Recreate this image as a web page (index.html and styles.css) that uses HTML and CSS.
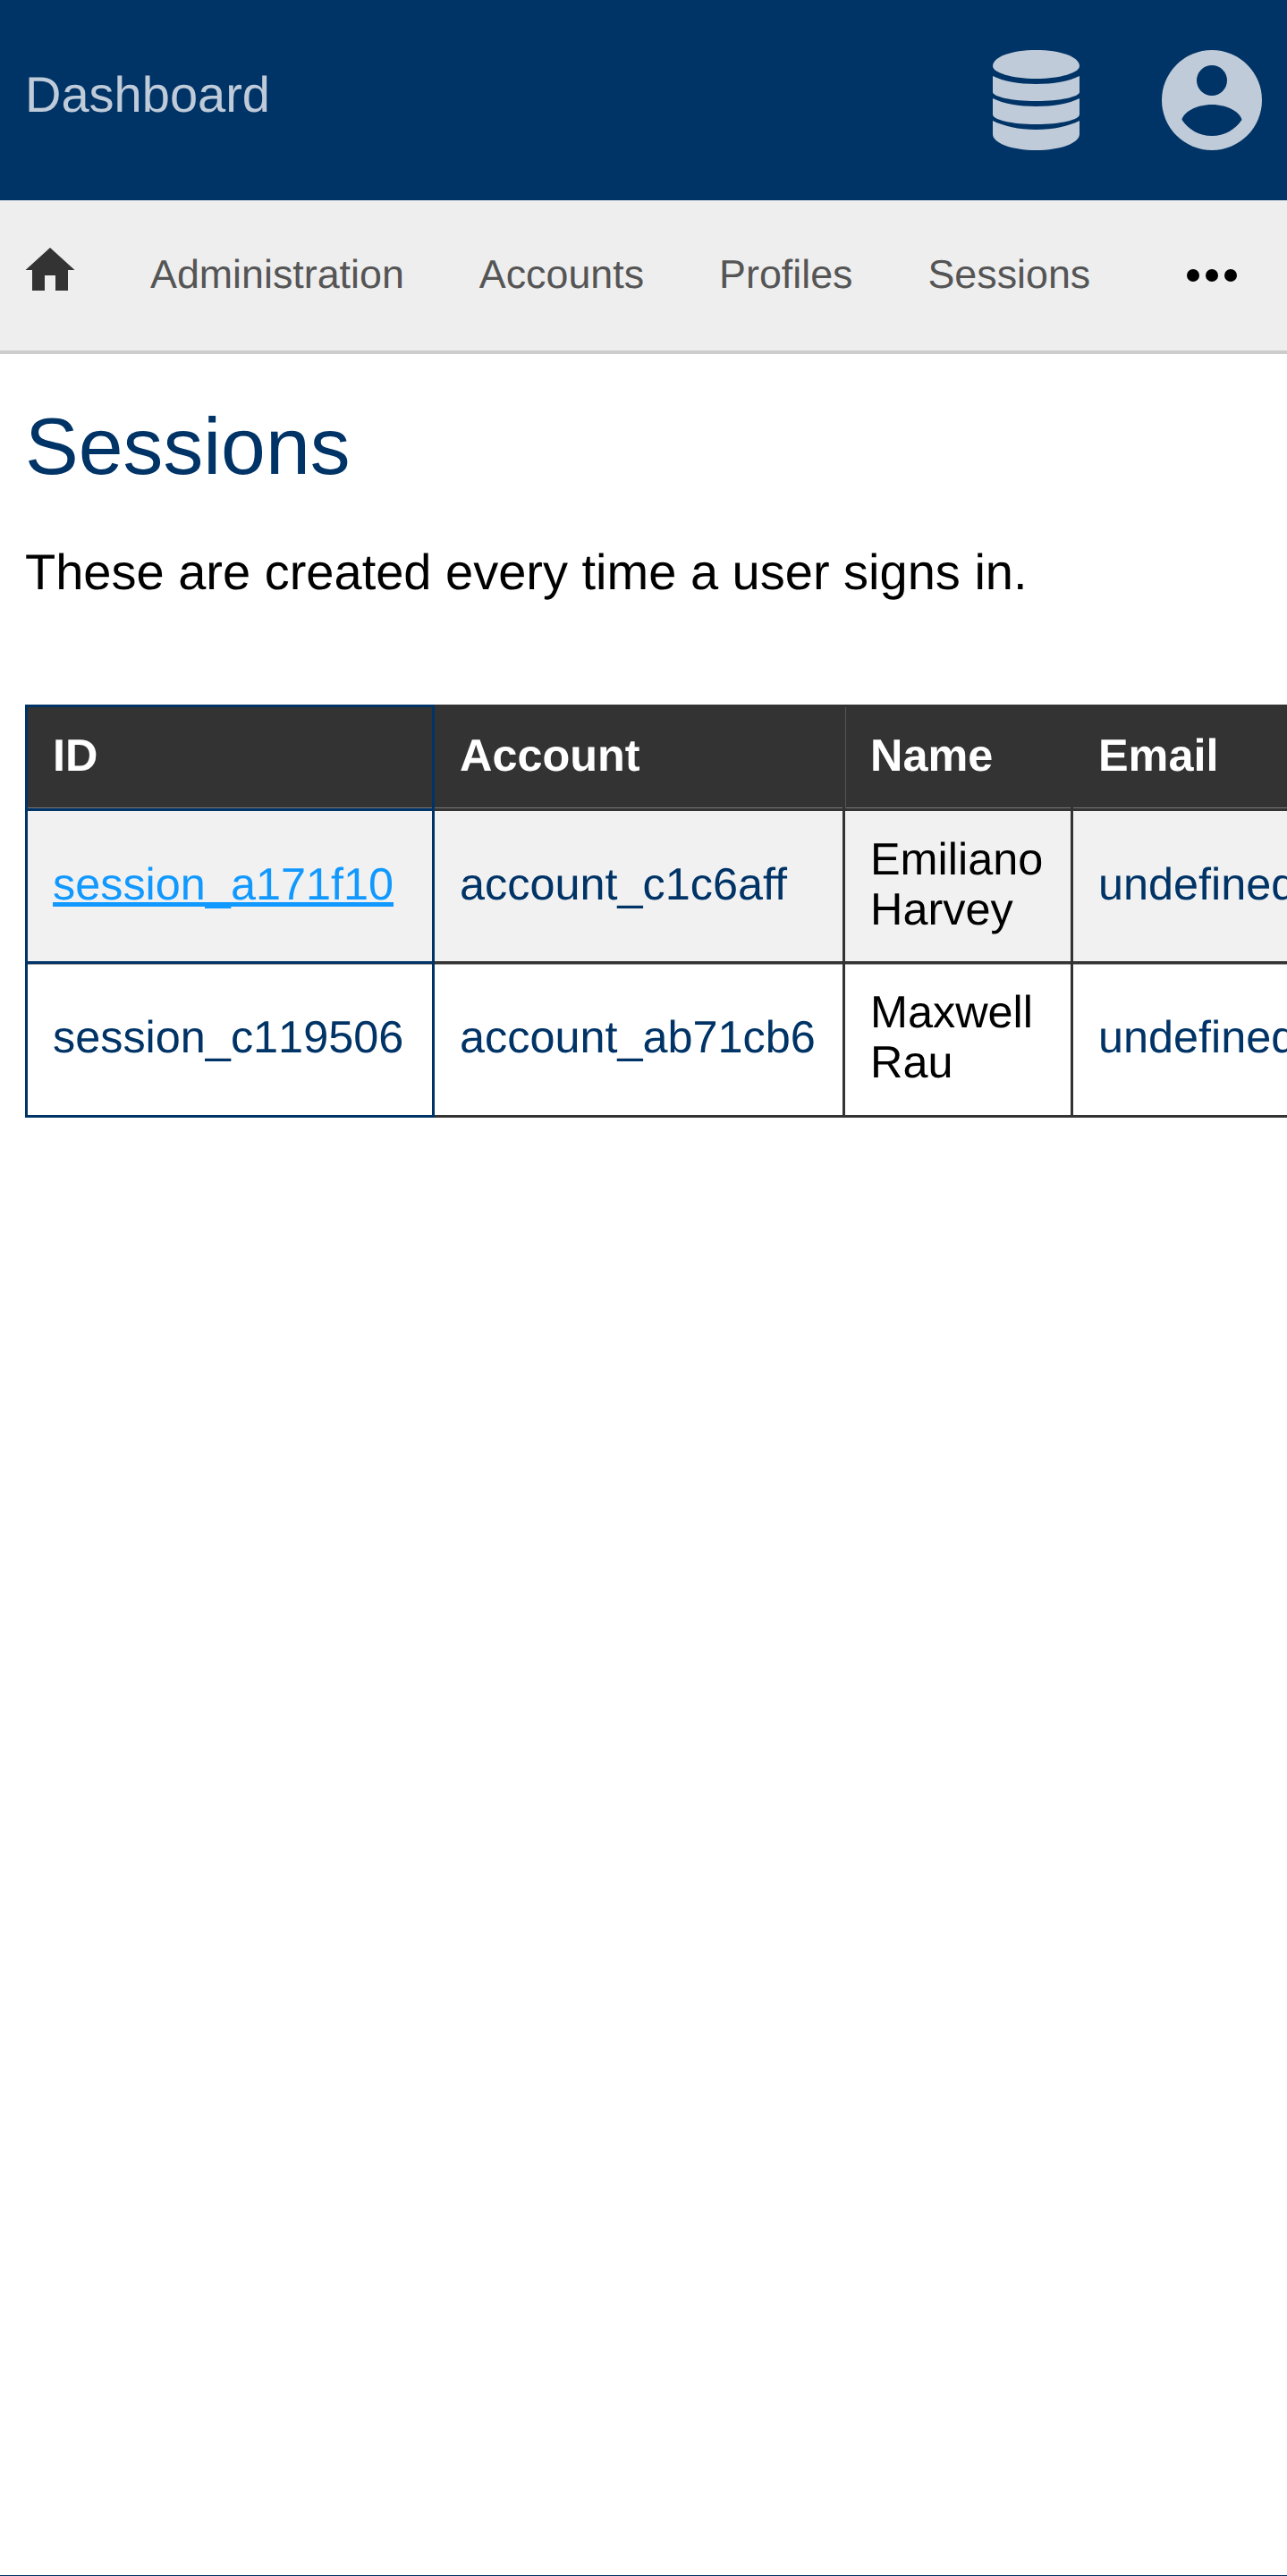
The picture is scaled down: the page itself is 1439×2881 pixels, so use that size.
FILE: index.html
```html
<!DOCTYPE html>
<html lang="en">
<head>
<meta charset="utf-8">
<title>Sessions</title>
<link rel="stylesheet" href="styles.css">
</head>
<body>
<header class="topbar">
  <a class="brand" href="#">Dashboard</a>
  <div class="top-icons">
    <svg class="db-icon" viewBox="0 0 97 112" width="97" height="112" aria-hidden="true">
      <path d="M48.500 0C21 0 0 7.500 0 18C0 25 21 32 48.500 32C76 32 97 25 97 18C97 7.500 76 0 48.500 0Z"/>
      <path d="M0 29C12 35 29 38 48.500 38C68 38 85 35 97 29V47C97 52 76 57 48.500 57C21 57 0 52 0 47Z"/>
      <path d="M0 54C12 60 29 63 48.500 63C68 63 85 60 97 54V72C97 78 76 83 48.500 83C21 83 0 78 0 72Z"/>
      <path d="M0 79C12 85 29 89 48.500 89C68 89 85 85 97 79V94C97 104 76 112 48.500 112C21 112 0 104 0 94Z"/>
    </svg>
    <svg class="user-icon" viewBox="0 0 112 112" width="112" height="112" aria-hidden="true">
      <path fill-rule="evenodd" d="M56 0A56 56 0 1 0 56 112A56 56 0 1 0 56 0ZM56 17A17 17 0 1 1 56 51A17 17 0 1 1 56 17ZM56 61C74 61 88 70 89.500 78C82 89 70 96 56 96C42 96 30 89 22.500 78C24 70 38 61 56 61Z"/>
    </svg>
  </div>
</header>
<nav class="subnav">
  <a class="home" href="#" aria-label="Home">
    <svg viewBox="0 0 56 48" width="56" height="48" aria-hidden="true">
      <path d="M28 0L55.500 25H48V48H34V31H22V48H8V25H0.500Z"/>
    </svg>
  </a>
  <a class="nav-link" href="#">Administration</a>
  <a class="nav-link" href="#">Accounts</a>
  <a class="nav-link" href="#">Profiles</a>
  <a class="nav-link" href="#">Sessions</a>
  <span class="more" aria-label="More"><i></i><i></i><i></i></span>
</nav>
<main class="content">
  <h1 class="title">Sessions</h1>
  <p class="lead">These are created every time a user signs in.</p>
  <div class="table-wrap">
    <table class="data">
      <thead>
        <tr><th class="col-id">ID</th><th class="col-account">Account</th><th class="col-name">Name</th><th class="col-email">Email</th></tr>
      </thead>
      <tbody>
        <tr class="odd">
          <td class="col-id"><a class="hover-link" href="#">session_a171f10</a></td>
          <td class="col-account navy">account_c1c6aff</td>
          <td class="col-name">Emiliano Harvey</td>
          <td class="col-email navy">undefined</td>
        </tr>
        <tr>
          <td class="col-id navy unkerned">session_c119506</td>
          <td class="col-account navy">account_ab71cb6</td>
          <td class="col-name">Maxwell Rau</td>
          <td class="col-email navy">undefined</td>
        </tr>
      </tbody>
    </table>
  </div>
</main>
</body>
</html>
```

FILE: styles.css
```css
html, body { margin: 0; padding: 0; }
body {
  font-family: "Liberation Sans", Arial, sans-serif;
  color: #000;
  background: #fff;
  min-height: 2880px;
  border-bottom: 1px solid #003366;
  overflow-x: hidden;
  text-rendering: geometricPrecision;
}
a { text-decoration: none; color: inherit; }

.topbar {
  height: 224px;
  background: #003366;
  display: flex;
  align-items: center;
  justify-content: space-between;
  padding: 0 28px;
  box-sizing: border-box;
}
.brand { font-size: 56px; line-height: 64px; color: #bfcbd9; margin-bottom: 12px; }
.top-icons { display: flex; align-items: center; gap: 92px; }
.top-icons svg { display: block; fill: #bfcbd9; }

.subnav {
  height: 172px;
  box-sizing: border-box;
  background: #eeeeee;
  border-bottom: 4px solid #cccccc;
  display: flex;
  align-items: center;
  padding: 0 28px;
}
.home { display: block; width: 56px; margin-right: 84px; margin-bottom: 14px; }
.home svg { display: block; fill: #333333; }
.nav-link { font-size: 44.8px; line-height: 52px; color: #555555; margin-right: 84px; margin-bottom: 3px; white-space: nowrap; }
.nav-link:nth-of-type(5) { margin-right: 0; }
.more { margin-left: auto; display: flex; gap: 7px; margin-right: 28px; }
.more i { display: block; width: 14px; height: 14px; border-radius: 50%; background: #000; }

.content { padding: 0 0 0 28px; }
.title { margin: 52px 0 61px; font-size: 89.6px; line-height: 103px; font-weight: 400; color: #003366; }
.lead { margin: 0 0 120px; font-size: 56px; line-height: 56px; }
.table-wrap { overflow: hidden; }
.data { border-collapse: collapse; table-layout: fixed; width: 1469px; font-size: 50.4px; line-height: 56px; }
.data th, .data td {
  padding: 26px 28px 30.5px;
  border: 3px solid #333333;
  text-align: left;
  box-sizing: border-box;
}
.data th { background: #333333; color: #fff; box-shadow: inset 0 -1px 0 #777777; }
.data .col-id { border-color: #003366; width: 455px; }
.data .col-account { width: 459px; }
.data .col-name { width: 255px; }
.data .col-email { width: 300px; }
.data th.col-name { box-shadow: inset 1px 0 0 #555555, inset 0 -1px 0 #777777; }
.odd td { background: #f1f1f1; }
tbody tr + tr td { box-shadow: inset 0 1px 0 rgba(51, 51, 51, 0.5); }
.navy { color: #003366; }
.unkerned { font-kerning: none; }
.hover-link { color: #1199ff; text-decoration: underline; }
```
